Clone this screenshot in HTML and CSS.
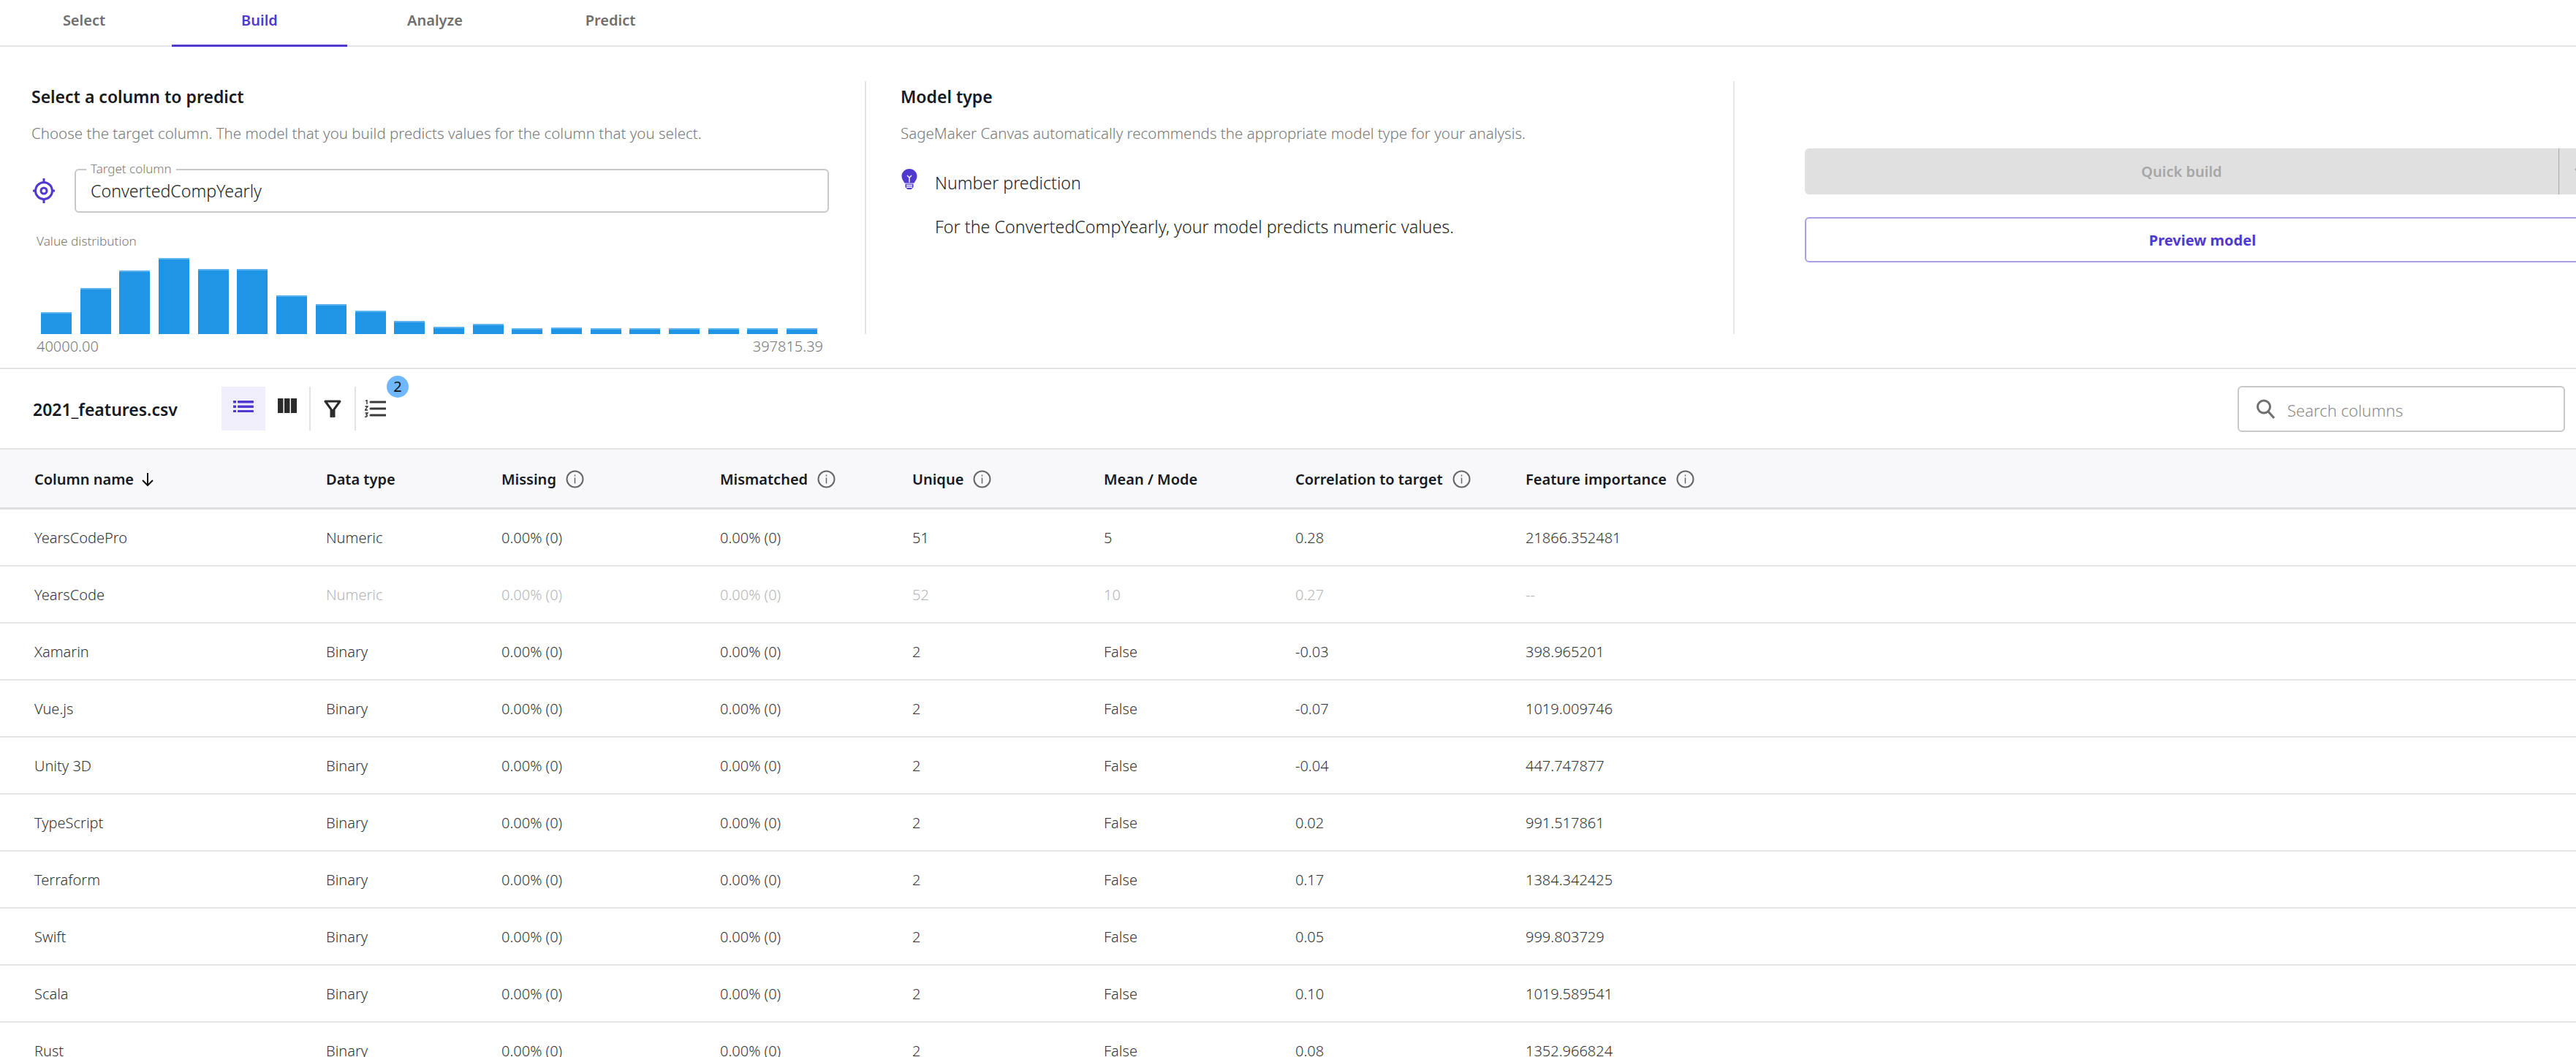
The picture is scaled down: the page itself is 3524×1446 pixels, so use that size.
FILE: index.html
```html
<!DOCTYPE html>
<html lang="en">
<head>
<meta charset="utf-8">
<title>SageMaker Canvas - Build</title>
<link rel="stylesheet" href="styles.css">
</head>
<body>
<nav class="tabs">
  <a class="tab">Select</a>
  <a class="tab tab-active">Build</a>
  <a class="tab">Analyze</a>
  <a class="tab">Predict</a>
</nav>

<section class="top">
  <div class="panel panel-target">
    <h2 class="heading">Select a column to predict</h2>
    <p class="desc">Choose the target column. The model that you build predicts values for the column that you select.</p>
    <div class="target-row">
      <svg class="target-icon" width="32" height="34" viewBox="0 0 32 34" fill="none" stroke="#4f39d0">
        <circle cx="16" cy="17" r="11.5" stroke-width="3"/>
        <circle cx="16" cy="17" r="4" stroke-width="3"/>
        <path d="M16 0v6M16 28v6M1 17h4M27 17h4" stroke-width="3"/>
      </svg>
      <div class="field">
        <span class="field-label">Target column</span>
        <span class="field-value">ConvertedCompYearly</span>
      </div>
    </div>
    <div class="dist-label">Value distribution</div>
    <div class="bars">
      <i class="bar" style="height:30px"></i><i class="bar" style="height:63px"></i><i class="bar" style="height:87px"></i><i class="bar" style="height:104px"></i><i class="bar" style="height:89px"></i><i class="bar" style="height:89px"></i><i class="bar" style="height:53px"></i><i class="bar" style="height:41px"></i><i class="bar" style="height:32px"></i><i class="bar" style="height:18px"></i><i class="bar" style="height:10px"></i><i class="bar" style="height:14px"></i><i class="bar" style="height:8px"></i><i class="bar" style="height:9px"></i><i class="bar" style="height:8px"></i><i class="bar" style="height:8px"></i><i class="bar" style="height:8px"></i><i class="bar" style="height:8px"></i><i class="bar" style="height:8px"></i><i class="bar" style="height:8px"></i>
    </div>
    <div class="range"><span>40000.00</span><span>397815.39</span></div>
  </div>

  <div class="panel panel-type">
    <h2 class="heading">Model type</h2>
    <p class="desc">SageMaker Canvas automatically recommends the appropriate model type for your analysis.</p>
    <div class="type-row">
      <svg class="bulb" width="22" height="28" viewBox="0 0 22 28">
        <path d="M11 0C5 0 .5 4.500 .5 10c0 4 2.500 6.500 4 9.500h13c1.500-3 4-5.500 4-9.500C21.500 4.500 17 0 11 0zM5.500 20.500h11V25l-3 3h-5l-3-3z" fill="#4f39d0"/>
        <path d="M8 9l3 3 3-3M11 12v6.500M7 22.500h8M7 25h8" fill="none" stroke="#fff" stroke-width="1.400"/>
      </svg>
      <div class="type-text">
        <div class="type-name">Number prediction</div>
        <div class="type-note">For the ConvertedCompYearly, your model predicts numeric values.</div>
      </div>
    </div>
  </div>

  <div class="panel panel-actions">
    <div class="split">
      <span class="split-main">Quick build</span>
      <span class="split-arrow">
        <svg width="20" height="12" viewBox="0 0 20 12" fill="none" stroke="#a6a6a6" stroke-width="2.500"><path d="M3 2l7 7 7-7"/></svg>
      </span>
    </div>
    <div class="preview">Preview model</div>
  </div>
</section>

<section class="toolbar">
  <span class="file">2021_features.csv</span>
  <div class="tools">
    <span class="tool tool-active">
      <svg width="28" height="16" viewBox="0 0 28 16" fill="#4f39d0"><rect x="0" y="0" width="4" height="3.500"/><rect x="6" y="0" width="22" height="3.500" rx="1"/><rect x="0" y="6.500" width="4" height="3.500"/><rect x="6" y="6.500" width="22" height="3.500" rx="1"/><rect x="0" y="13" width="4" height="3.500"/><rect x="6" y="13" width="22" height="3.500" rx="1"/></svg>
    </span>
    <span class="tool">
      <svg class="tool-columns" width="26" height="20" viewBox="0 0 26 20" fill="#2b2b2b"><rect x="0" y="0" width="7.500" height="20"/><rect x="9" y="0" width="7.500" height="20"/><rect x="18" y="0" width="8" height="20"/></svg>
    </span>
    <span class="tool-sep"></span>
    <span class="tool">
      <svg width="24" height="24" viewBox="0 0 24 24"><path d="M2 2h20l-8 11v9.500a1.500 1.500 0 0 1-4 0V13z" fill="none" stroke="#2b2b2b" stroke-width="3" stroke-linejoin="round"/><path d="M10 13h4v9.500h-4z" fill="#2b2b2b"/></svg>
    </span>
    <span class="tool-sep"></span>
    <span class="tool tool-order">
      <svg width="29" height="24" viewBox="0 0 29 24"><path d="M8 3h21M8 12h21M8 21h21" stroke="#3a3a3a" stroke-width="3" stroke-linecap="round"/><path d="M1 1.500l2-1v5.500M.5 9h3.500l-3.500 5h3.500M.5 18h3.500l-2 2.500c2 0 2 3-2 3" fill="none" stroke="#2b2b2b" stroke-width="1.300"/></svg>
      <span class="badge">2</span>
    </span>
  </div>
  <div class="search">
    <svg width="26" height="27" viewBox="0 0 26 27" fill="none" stroke="#6f6f6f" stroke-width="3"><circle cx="11" cy="10.500" r="8.500"/><path d="M17 17l8 9"/></svg>
    <span>Search columns</span>
  </div>
</section>

<div class="row row-head">
  <span class="hcell">Column name <svg class="sort" width="18" height="20" viewBox="0 0 18 20" fill="none" stroke="#111" stroke-width="2"><path d="M9 1v17M2 11l7 7 7-7"/></svg></span>
  <span class="hcell">Data type</span>
  <span class="hcell">Missing <svg class="info" width="25" height="25" viewBox="0 0 25 25" fill="none" stroke="#666"><circle cx="12.500" cy="12.500" r="11" stroke-width="2"/><path d="M12.500 10.500v8M12.500 6.500v2" stroke-width="1.500"/></svg></span>
  <span class="hcell">Mismatched <svg class="info" width="25" height="25" viewBox="0 0 25 25" fill="none" stroke="#666"><circle cx="12.500" cy="12.500" r="11" stroke-width="2"/><path d="M12.500 10.500v8M12.500 6.500v2" stroke-width="1.500"/></svg></span>
  <span class="hcell">Unique <svg class="info" width="25" height="25" viewBox="0 0 25 25" fill="none" stroke="#666"><circle cx="12.500" cy="12.500" r="11" stroke-width="2"/><path d="M12.500 10.500v8M12.500 6.500v2" stroke-width="1.500"/></svg></span>
  <span class="hcell">Mean / Mode</span>
  <span class="hcell">Correlation to target <svg class="info" width="25" height="25" viewBox="0 0 25 25" fill="none" stroke="#666"><circle cx="12.500" cy="12.500" r="11" stroke-width="2"/><path d="M12.500 10.500v8M12.500 6.500v2" stroke-width="1.500"/></svg></span>
  <span class="hcell">Feature importance <svg class="info" width="25" height="25" viewBox="0 0 25 25" fill="none" stroke="#666"><circle cx="12.500" cy="12.500" r="11" stroke-width="2"/><path d="M12.500 10.500v8M12.500 6.500v2" stroke-width="1.500"/></svg></span>
</div>
<div class="row"><span>YearsCodePro</span><span>Numeric</span><span>0.00% (0)</span><span>0.00% (0)</span><span>51</span><span>5</span><span>0.28</span><span>21866.352481</span></div>
<div class="row row-dim"><span>YearsCode</span><span>Numeric</span><span>0.00% (0)</span><span>0.00% (0)</span><span>52</span><span>10</span><span>0.27</span><span>--</span></div>
<div class="row"><span>Xamarin</span><span>Binary</span><span>0.00% (0)</span><span>0.00% (0)</span><span>2</span><span>False</span><span>-0.03</span><span>398.965201</span></div>
<div class="row"><span>Vue.js</span><span>Binary</span><span>0.00% (0)</span><span>0.00% (0)</span><span>2</span><span>False</span><span>-0.07</span><span>1019.009746</span></div>
<div class="row"><span>Unity 3D</span><span>Binary</span><span>0.00% (0)</span><span>0.00% (0)</span><span>2</span><span>False</span><span>-0.04</span><span>447.747877</span></div>
<div class="row"><span>TypeScript</span><span>Binary</span><span>0.00% (0)</span><span>0.00% (0)</span><span>2</span><span>False</span><span>0.02</span><span>991.517861</span></div>
<div class="row"><span>Terraform</span><span>Binary</span><span>0.00% (0)</span><span>0.00% (0)</span><span>2</span><span>False</span><span>0.17</span><span>1384.342425</span></div>
<div class="row"><span>Swift</span><span>Binary</span><span>0.00% (0)</span><span>0.00% (0)</span><span>2</span><span>False</span><span>0.05</span><span>999.803729</span></div>
<div class="row"><span>Scala</span><span>Binary</span><span>0.00% (0)</span><span>0.00% (0)</span><span>2</span><span>False</span><span>0.10</span><span>1019.589541</span></div>
<div class="row"><span>Rust</span><span>Binary</span><span>0.00% (0)</span><span>0.00% (0)</span><span>2</span><span>False</span><span>0.08</span><span>1352.966824</span></div>
</body>
</html>
```

FILE: styles.css
```css
* { box-sizing: border-box; }
html, body { height: 100%; overflow: hidden; }
body {
  margin: 0;
  background: #fff;
  color: #2b2b2b;
  font-family: "Noto Sans", "Open Sans", sans-serif;
  font-size: 20px;
  font-weight: 300;
  line-height: 28px;
}

.tabs {
  display: flex;
  height: 64px;
  border-bottom: 2px solid #e3e3e3;
}
.tab {
  width: 240px;
  height: 62px;
  margin-bottom: -2px;
  padding-top: 14px;
  text-align: center;
  font-weight: 600;
  color: #6f6f6f;
}
.tab:first-child { width: 235px; padding-right: 5px; }
.tab-active {
  height: 64px;
  color: #4f39d0;
  border-bottom: 3px solid #4f39d0;
}

.top {
  display: grid;
  grid-template-columns: 1183px 1188px 1fr;
  height: 441px;
  padding: 47px 0 48px;
  border-bottom: 2px solid #e3e3e3;
}
.panel { height: 346px; min-width: 0; }
.panel-target { padding: 7px 0 0 43px; }
.panel-type { padding: 7px 0 0 47px; border-left: 2px solid #e3e3e3; }
.panel-actions { padding: 92px 0 0 96px; border-left: 2px solid #e8e8e8; }

.heading { margin: 0; font-size: 23px; line-height: 28px; font-weight: 600; color: #16191f; }
.desc { margin: 22px 0 0; font-size: 20.500px; line-height: 28px; color: #777; }

.target-row { display: flex; align-items: center; margin-top: 35px; }
.target-icon { margin-left: 1px; margin-right: 26px; flex: none; }
.field {
  position: relative;
  width: 1032px;
  height: 60px;
  padding: 14px 20px 0;
  border: 2px solid #c8c8c8;
  border-radius: 6px;
}
.field-label {
  position: absolute;
  top: -14px;
  left: 14px;
  padding: 0 6px;
  background: #fff;
  color: #777;
  font-size: 17px;
  line-height: 24px;
}
.field-value { font-size: 23.200px; color: #222; }

.dist-label { margin: 29px 0 0 7px; font-size: 17.200px; line-height: 20px; color: #777; }
.bars {
  display: flex;
  align-items: flex-end;
  gap: 11.700px;
  height: 117px;
  margin-left: 13px;
}
.bar { display: block; width: 42px; background: #2095e6; border-top: 2px solid #61b3ee; }
.range {
  display: flex;
  justify-content: space-between;
  width: 1076px;
  margin: 3px 0 0 7px;
  line-height: 28px;
  color: #777;
}

.type-row { display: flex; align-items: flex-start; gap: 24px; margin-top: 35px; }
.bulb { flex: none; margin-left: 1px; }
.type-name { margin-top: 5px; font-size: 23.200px; line-height: 28px; color: #222; }
.type-note { margin-top: 32px; font-size: 23.300px; line-height: 28px; color: #222; }

.split { display: flex; width: 1190px; height: 63px; background: #e0e0e0; border-radius: 6px 0 0 6px; }
.split-main { width: 1031px; text-align: center; line-height: 63px; font-weight: 600; color: #a6a6a6; }
.split-arrow { display: flex; align-items: center; padding-left: 19px; border-left: 1px solid #a6a6a6; }
.preview {
  width: 1088px;
  height: 62px;
  margin-top: 31px;
  border: 2px solid #a89fe6;
  border-radius: 6px;
  text-align: center;
  line-height: 60px;
  font-weight: 700;
  color: #4f39d0;
}

.toolbar {
  display: flex;
  align-items: center;
  height: 108px;
  padding: 0 15px 0 45px;
}
.file { width: 258px; padding-top: 1px; font-size: 23px; font-weight: 600; color: #16191f; }
.tools { display: flex; align-items: stretch; height: 60px; }
.tool {
  position: relative;
  display: flex;
  align-items: flex-start;
  justify-content: center;
  width: 60px;
  padding-top: 16px;
}
.tool-active { padding-top: 19px; background: #f0eefb; }
.tool-order { padding-top: 18px; justify-content: flex-start; padding-left: 12px; }
.tool:nth-child(4) { padding-top: 18px; }
.tool-sep { width: 2px; background: #e3e3e3; }
.badge {
  position: absolute;
  top: -15px;
  left: 42px;
  width: 30px;
  height: 30px;
  border-radius: 50%;
  background: #6fb7ff;
  text-align: center;
  line-height: 30px;
  font-size: 20px;
  font-weight: 400;
  color: #111;
}
.search {
  display: flex;
  align-items: center;
  gap: 17px;
  width: 448px;
  height: 63px;
  margin-left: auto;
  padding-left: 23px;
  border: 2px solid #c8c8c8;
  border-radius: 6px;
  font-size: 22px;
  color: #8a8a8a;
}
.search span { padding-top: 3px; }

.row {
  display: grid;
  grid-template-columns: 399px 240px 299px 263px 262px 262px 315px 1fr;
  align-items: center;
  height: 78px;
  padding: 2px 0 0 47px;
  border-bottom: 2px solid #e6e6e6;
  color: #333;
}
.row-head {
  height: 84px;
  padding-top: 2px;
  background: #f8f8fa;
  border-top: 2px solid #e3e3e3;
  border-bottom: 3px solid #dedede;
  font-weight: 600;
  color: #16191f;
}
.hcell { display: flex; align-items: center; gap: 10px; }
.info { margin-left: 3px; }
.row-dim { color: #b5b5b5; }
.row-dim span:first-child { color: #333; }
```
